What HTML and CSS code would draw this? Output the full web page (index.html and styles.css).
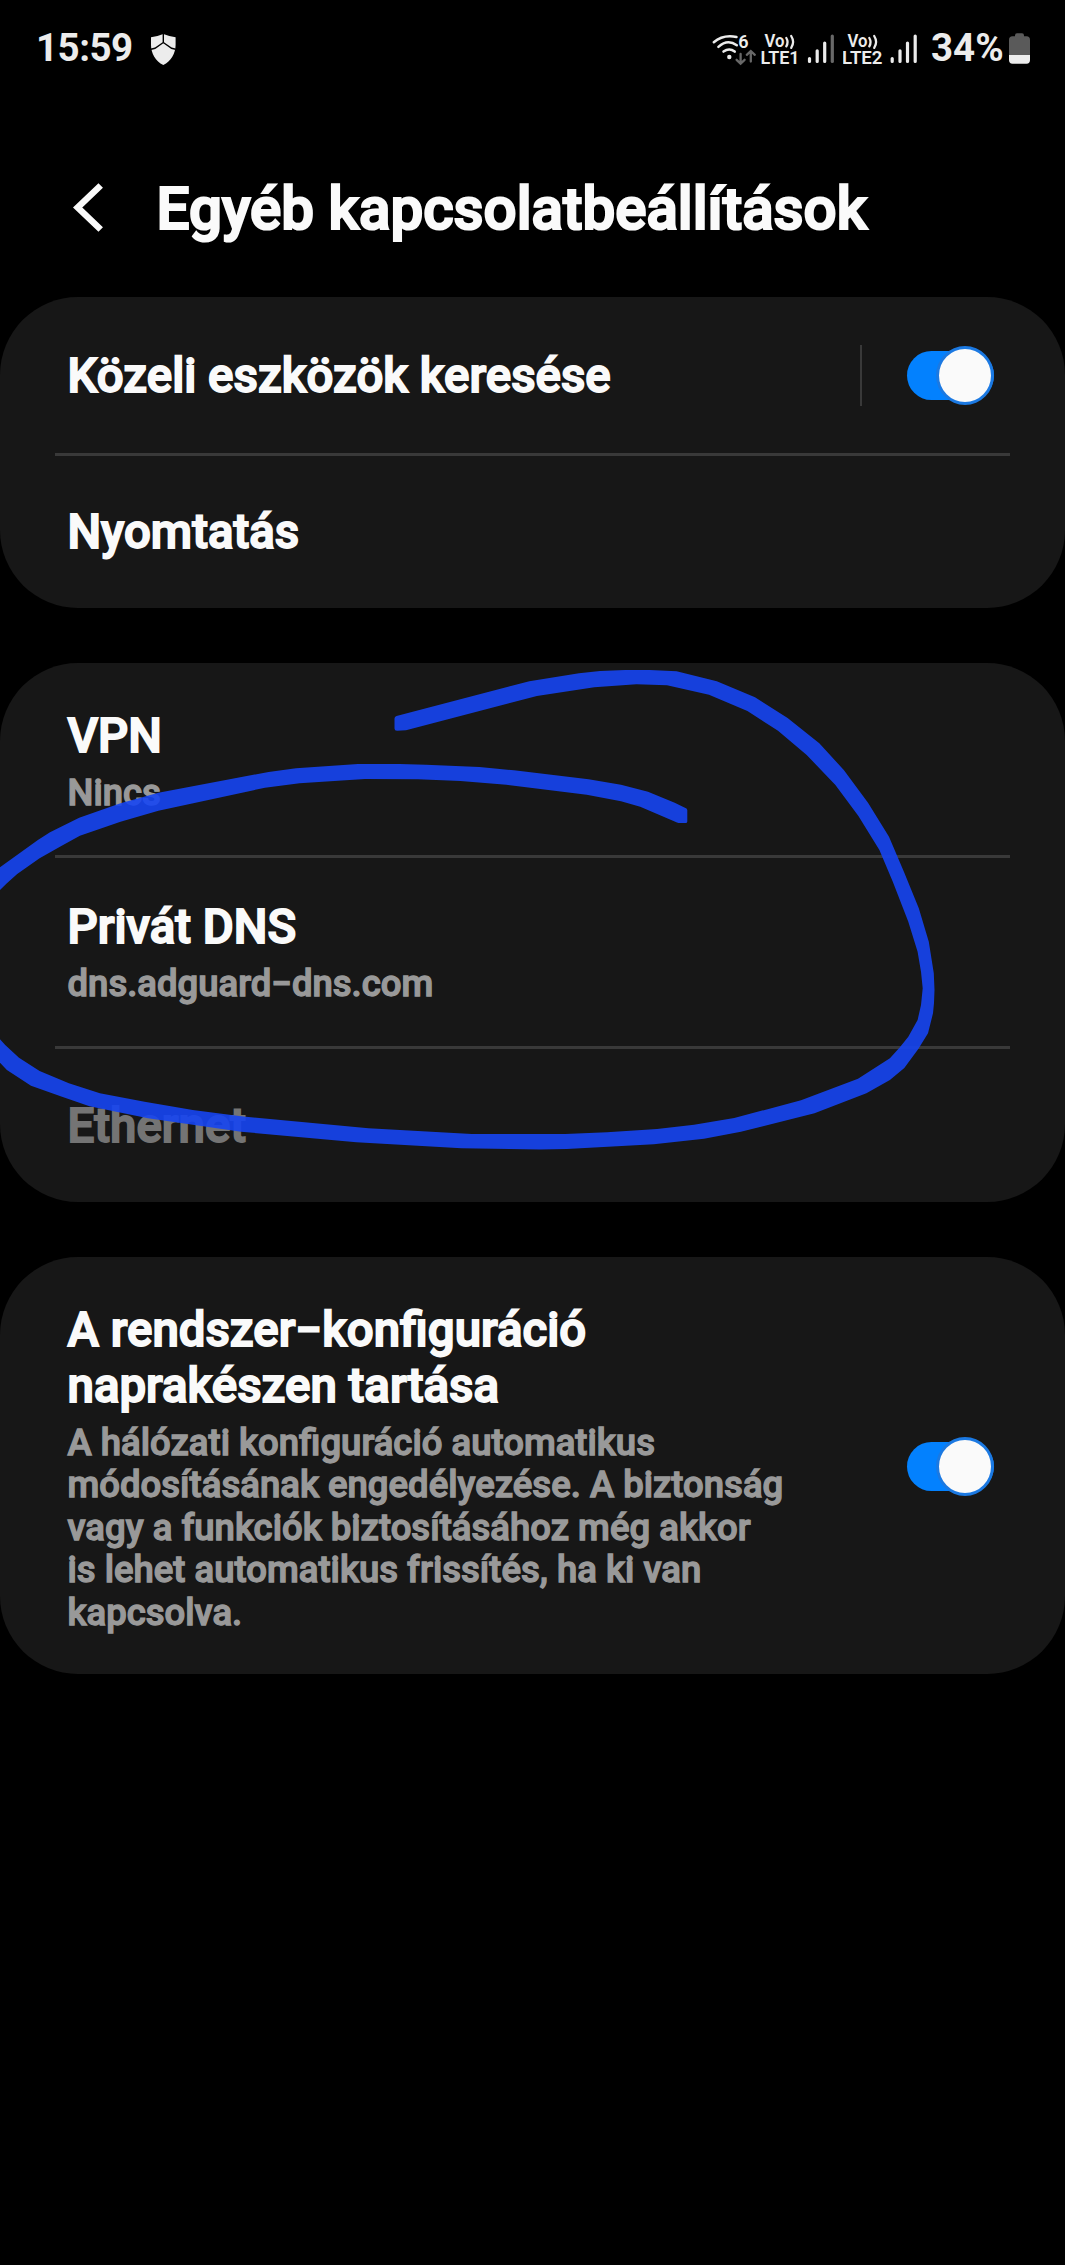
FILE: index.html
```
<!DOCTYPE html>
<html lang="hu">
<head>
<meta charset="utf-8">
<title>Egyéb kapcsolatbeállítások</title>
<link rel="stylesheet" href="styles.css">
</head>
<body>
<div class="screen">
  <div class="status">
    <span class="clock">15:59</span>
    <svg class="shield" width="26" height="34" viewBox="150 33 26 34">
      <path d="M151 37.2Q157.500 36.500 163.300 34Q169.500 36.500 175.600 37.200V45C175.600 53 171 61.500 163.300 65C155.600 61.500 151 53 151 45Z" fill="#ececec"/>
      <path d="M163.300 33V42.500M151 49.300L155 48.300L163.300 42.500L171.600 48.300L175.600 49.300" fill="none" stroke="#000" stroke-width="1.400"/>
    </svg>
    <div class="indicators">
      <svg class="wifi" width="49" height="36" viewBox="712 31 49 36">
        <g fill="none" stroke="#ececec" stroke-width="2.500" stroke-linecap="round">
          <path d="M713.800 42.200Q723 34.300 736.500 37"/>
          <path d="M718.400 46.800Q727.500 38.500 736.800 45.200"/>
          <path d="M723.500 51.600Q729.300 47.300 734.700 51.600"/>
        </g>
        <circle cx="729.300" cy="57" r="2.200" fill="#ececec"/>
        <text x="738.200" y="47.500" class="tiny">6</text>
        <path d="M740.600 54V63.200M736.600 59.800L740.600 63.600L744.600 59.800M750.800 61.500V51.500M746.800 54.800L750.800 51L754.800 54.800" fill="none" stroke="#686868" stroke-width="2.300" stroke-linecap="round"/>
      </svg>
      <svg class="volte" width="46" height="36" viewBox="761 31 46 36">
        <text x="764.500" y="47.200" class="tiny" textLength="20" lengthAdjust="spacingAndGlyphs">Vo</text>
        <text x="760.600" y="64.200" class="tiny" textLength="39" lengthAdjust="spacingAndGlyphs">LTE1</text>
        <path d="M786.300 38Q788.800 42 786.300 46.300M791.200 36Q795 42 791.200 47.800" fill="none" stroke="#ececec" stroke-width="2.300" stroke-linecap="round"/>
      </svg>
      <svg class="bars" width="36" height="36" viewBox="807 31 36 36">
        <g stroke="#ececec" stroke-width="3.200" stroke-linecap="round"><path d="M809.500 58.500V61.500M817.200 50.800V61.500M824.700 43V61.500"/><path d="M832.300 36V61.500" stroke="#686868"/></g>
      </svg>
      <svg class="volte" width="46" height="36" viewBox="843 31 46 36">
        <text x="847.500" y="47.200" class="tiny" textLength="20" lengthAdjust="spacingAndGlyphs">Vo</text>
        <text x="842" y="64.200" class="tiny" textLength="40.500" lengthAdjust="spacingAndGlyphs">LTE2</text>
        <path d="M869.300 38Q871.800 42 869.300 46.300M874.200 36Q878 42 874.200 47.800" fill="none" stroke="#ececec" stroke-width="2.300" stroke-linecap="round"/>
      </svg>
      <svg class="bars" width="42" height="36" viewBox="889 31 42 36">
        <path d="M892.200 58.500V61.500M900 50.800V61.500M907.500 43V61.500M915.200 36V61.500" stroke="#ececec" stroke-width="3.200" stroke-linecap="round"/>
      </svg>
      <span class="percent">34%</span>
      <svg class="battery" width="22" height="36" viewBox="1009 31 22 36">
        <path d="M1015 35.500Q1015 33.300 1017 33.300H1022Q1024 33.300 1024 35.500V36.300H1026.500Q1030 36.300 1030 40V55H1009V40Q1009 36.300 1012.500 36.300H1015Z" fill="#5a5a5a"/>
        <path d="M1009 55H1030V60Q1030 63.700 1026.500 63.700H1012.500Q1009 63.700 1009 60Z" fill="#ececec"/>
      </svg>
    </div>
  </div>

  <header class="header">
    <svg class="back" width="36" height="56" viewBox="70 179 36 56">
      <path d="M100.700 185.500L77.700 207.500L100.700 229.500" fill="none" stroke="#fafafa" stroke-width="6.500"/>
    </svg>
    <h1 class="title">Egyéb kapcsolatbeállítások</h1>
  </header>

  <main class="cards">
    <section class="card">
      <div class="row row-first">
        <div class="name">Közeli eszközök keresése</div>
        <div class="action"><span class="separator"></span><span class="toggle"><span class="thumb"></span></span></div>
      </div>
      <div class="divider"></div>
      <div class="row row-print"><div class="name">Nyomtatás</div></div>
    </section>

    <section class="card">
      <div class="row row-vpn">
        <div><div class="name">VPN</div><div class="note">Nincs</div></div>
      </div>
      <div class="divider"></div>
      <div class="row row-dns">
        <div><div class="name">Privát DNS</div><div class="note">dns.adguard−dns.com</div></div>
      </div>
      <div class="divider"></div>
      <div class="row row-ethernet"><div class="name disabled">Ethernet</div></div>
    </section>

    <section class="card">
      <div class="row row-config">
        <div>
          <div class="name">A rendszer−konfiguráció<br>naprakészen tartása</div>
          <div class="note">A hálózati konfiguráció automatikus<br>módosításának engedélyezése. A biztonság<br>vagy a funkciók biztosításához még akkor<br>is lehet automatikus frissítés, ha ki van<br>kapcsolva.</div>
        </div>
        <span class="toggle"><span class="thumb"></span></span>
      </div>
    </section>
  </main>

  <!-- hand-drawn marker loop around the private DNS row -->
  <svg class="marker" width="1065" height="600" viewBox="0 640 1065 600">
    <path d="M394.500 718.500Q394.500 716.500 396.500 716L529.300 681.300L579 673.300L600 671L625 670L650 670L676.600 671.300L716.800 681.300L755 697.300L787.600 718L819.300 743.300L843.800 770L868 802.700L889 836.700L904 872L918.800 908.300L928.800 941.700L933.800 973.300L934.500 990L934 1003L933 1013.300L928 1033.300L918.300 1049L904.300 1068L889.900 1080L866.400 1093.300L814.500 1113.300L740.900 1131.700L704 1138.700L653.800 1144.300L566.800 1149L540 1149.500L461.400 1148.300L356.400 1142.300L241 1131.700L148 1118.300L89.500 1106.300L62 1096.700L31 1085.700L6.900 1070L0 1062.700L-30 1030L-45 960L-30 895L0 867.300L37.900 840L50 832.300L79.200 817.700L120.500 803.300L158.400 792.700L268.600 772L296 768.300L358 764L399.400 764L426 764.700L479.500 767L514 770.300L588.600 779.300L621 784.700L648 791.700L674.700 802.700L686.500 808.500L687.300 810V821.500Q687.300 823 685.500 823H678.500L677 822.500L640.200 806.700L621 801.300L586.700 794.700L506.300 784.700L460.400 781L418 779.300L365 779L299.600 783.300L265 787.700L158.400 810.700L120.500 821.700L79.900 835.700L61.300 846L39.600 858.300L17.200 874L6.900 883.300L0 890L-20 915L-30 960L-20 1018L0 1039.300L5.200 1045L19 1057.700L39.600 1071L68.900 1083.300L99.900 1093.300L144.600 1101.700L192.800 1110L241 1116.300L368.500 1128.300L471.800 1134L565 1134L607 1132.300L657 1129L694 1124.700L734.200 1118L801 1100.300L858 1078.700L889.900 1058.300L899.900 1047.300L908.300 1036.700L917.600 1020L921 1005L922.700 988.300L921 971.700L917.600 951.700L908.300 921.700L892.800 881.700L879.400 850L858.400 816L835.400 785L806.700 755L778 730.700L747.400 711L709 694.700L667 685.300L636.400 684.300L594.300 687.300L536.900 696L406 730.300L397 730.800Q394.500 730.800 394.500 728.500Z" fill="#1645f2" fill-opacity="0.900"/>
  </svg>
</div>
</body>
</html>
```
FILE: styles.css
```
* { box-sizing: border-box; }

body {
  margin: 0;
  background: #000;
  font-family: Roboto, "Noto Sans", sans-serif;
}

.screen {
  position: relative;
  width: 1065px;
  height: 2265px;
  overflow: hidden;
  background: #000;
}

.status {
  display: flex;
  align-items: flex-start;
  height: 96px;
  padding: 31px 34px 0 36px;
  color: #ececec;
}

.clock, .percent {
  font-size: 38.5px;
  line-height: 34px;
  font-weight: 700;
}

.clock { width: 114px; letter-spacing: -0.5px; }
.shield { margin-top: 2px; }
.indicators { display: flex; margin-left: auto; }
.percent { width: 78px; }

.tiny {
  font-size: 18px;
  font-weight: 600;
  fill: #ececec;
}

.header {
  display: flex;
  align-items: flex-start;
  gap: 50.5px;
  height: 201px;
  padding: 78px 70px 0;
}

.back { margin-top: 5px; }

.title {
  margin: 0;
  font-size: 58.3px;
  line-height: 70px;
  font-weight: 500;
  color: #fafafa;
  -webkit-text-stroke: 2.2px #fafafa;
}

.cards {
  display: flex;
  flex-direction: column;
  gap: 55px;
}

.card {
  border-radius: 78px;
  background: #171717;
}

.divider {
  height: 3px;
  margin: 0 55px;
  background: #393939;
}

.row {
  display: flex;
  align-items: center;
  justify-content: space-between;
  padding: 0 71px 0 67.5px;
}

.row-first { height: 156px; }
.row-first .name { padding-top: 2px; }
.row-print { height: 152px; }
.row-vpn { height: 192px; padding-top: 4px; }
.row-dns { height: 188px; }
.row-ethernet { height: 153px; }
.row-config { height: 417px; padding-top: 5px; }
.row-config .toggle { margin-top: -4px; }

.name {
  font-size: 47.4px;
  line-height: 56px;
  font-weight: 500;
  color: #fafafa;
  -webkit-text-stroke: 1.8px currentColor;
}

.disabled { color: #747474; }

.note {
  margin-top: 8px;
  font-size: 36.5px;
  line-height: 42.4px;
  font-weight: 500;
  color: #999;
  -webkit-text-stroke: 1.3px currentColor;
}

.action { display: flex; align-items: center; gap: 45px; }

.separator {
  width: 2px;
  height: 61px;
  background: #393939;
}

.toggle {
  display: flex;
  align-items: center;
  justify-content: flex-end;
  flex: none;
  width: 87px;
  height: 49px;
  border-radius: 25px;
  background: #0381fe;
}

.thumb {
  flex: none;
  width: 58px;
  height: 59px;
  border: 3px solid #1b79e2;
  border-radius: 50%;
  background: #fafafa;
}

.marker {
  position: absolute;
  left: 0;
  top: 640px;
}
```
